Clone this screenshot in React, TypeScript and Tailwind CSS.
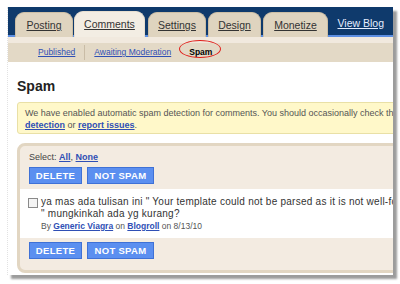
const font = { fontFamily: '"Liberation Sans", Arial, sans-serif' };

const tabs = [
  { label: "Posting", w: "w-[58px]", ml: "ml-[7px]" },
  { label: "Comments", w: "w-[71px]", ml: "ml-[1px]", active: true },
  { label: "Settings", w: "w-[58px]", ml: "ml-[3px]" },
  { label: "Design", w: "w-[53px]", ml: "ml-[2px]" },
  { label: "Monetize", w: "w-[65px]", ml: "ml-[2px]" },
];

const Btn = ({ children, w }: { children: React.ReactNode; w: string }) => (
  <button
    className={`${w} h-[17px] bg-[#5b8ff0] border border-[#3f71d6] text-white text-[9.5px] font-bold tracking-[0.3px] leading-none flex items-center justify-center`}
  >
    {children}
  </button>
);

const Link = ({ children }: { children: React.ReactNode }) => (
  <span className="text-[#2f4fb5] font-bold underline">{children}</span>
);

export default function App() {
  return (
    <div className="w-[400px] h-[284px] bg-white pt-[7px] pl-[7px]" style={font}>
      <div className="w-[386px] h-[268px] overflow-hidden bg-white shadow-[4px_4px_2px_#9c9c9c] border-l border-dotted border-[#e2e2e2]">
        {/* Top tabs */}
        <div className="h-[30px] bg-[#0f3a6c] border-b-2 border-[#5d8fe2] flex items-end">
          {tabs.map((t) => (
            <div
              key={t.label}
              className={`${t.w} ${t.ml} -mb-[2px] flex justify-center pt-[6px] rounded-t-[9px] border border-b-0 ${
                t.active
                  ? "h-[26px] bg-[#f3ede3] border-[#e8dfd0]"
                  : "h-[25px] bg-[#dfd4bf] border-[#cdbfa5]"
              }`}
            >
              <span className="text-[10.5px] text-[#333] underline leading-[13px]">
                {t.label}
              </span>
            </div>
          ))}
          <span className="ml-auto mr-[9px] mb-[5px] text-[10.5px] text-[#e4edff] underline leading-[13px]">
            View Blog
          </span>
        </div>
        <div className="h-[6px] bg-[#f1e9de]" />

        {/* Sub nav */}
        <div className="h-[19px] bg-[#e3d9c6] flex items-center pl-[30px] text-[8.5px]">
          <span className="text-[#2f4fb5] underline">Published</span>
          <span className="w-px h-[15px] bg-[#c9bca6] mx-[9px]" />
          <span className="text-[#2f4fb5] underline">Awaiting Moderation</span>
          <span className="relative ml-[18px] font-bold text-black">
            Spam
            <span className="absolute -left-[10px] -top-[6px] w-[42px] h-[18px] rounded-[50%] border border-[#e0201c]" />
          </span>
        </div>

        {/* Content */}
        <div className="pl-[9px] pt-[16px]">
          <h2 className="text-[14px] font-bold leading-[16px] text-[#222]">Spam</h2>

          <div className="mt-[8px] w-[420px] h-[32px] bg-[#fff8c9] border border-[#e9e0a6] rounded-[3px] px-[7px] pt-[4px] text-[9px] leading-[12px] text-[#555] whitespace-nowrap">
            <div>
              We have enabled automatic spam detection for comments. You should occasionally check this page. Learn more about spam
            </div>
            <div>
              <Link>detection</Link> or <Link>report issues</Link>.
            </div>
          </div>

          {/* Comments panel */}
          <div className="mt-[9px] w-[420px] border-[3px] border-[#e2d6c2] rounded-[8px] bg-[#f3ebe1]">
            <div className="pl-[9px] pt-[5px] pb-[5px]">
              <div className="text-[9px] leading-[12px] text-[#444]">
                Select: <Link>All</Link>, <Link>None</Link>
              </div>
              <div className="mt-[4px] flex gap-[5px]">
                <Btn w="w-[53px]">DELETE</Btn>
                <Btn w="w-[67px]">NOT SPAM</Btn>
              </div>
            </div>

            <div className="bg-white h-[49px] pl-[8px] pt-[7px] flex gap-[3px] whitespace-nowrap">
              <div className="w-[10px] h-[10px] mt-[2px] border border-[#8a8a8a] bg-[#f4f4f4]" />
              <div className="text-[10px] leading-[12px] text-[#333]">
                <div className="tracking-[0.25px]">
                  ya mas ada tulisan ini " Your template could not be parsed as it is not well-formed. "
                </div>
                <div className="tracking-[0.25px]">" mungkinkah ada yg kurang?</div>
                <div className="text-[8.5px] text-[#555]">
                  By <Link>Generic Viagra</Link> on <Link>Blogroll</Link> on 8/13/10
                </div>
              </div>
            </div>

            <div className="pl-[9px] pt-[4px] pb-[11px] flex gap-[5px]">
              <Btn w="w-[53px]">DELETE</Btn>
              <Btn w="w-[67px]">NOT SPAM</Btn>
            </div>
          </div>
        </div>
      </div>
    </div>
  );
}
